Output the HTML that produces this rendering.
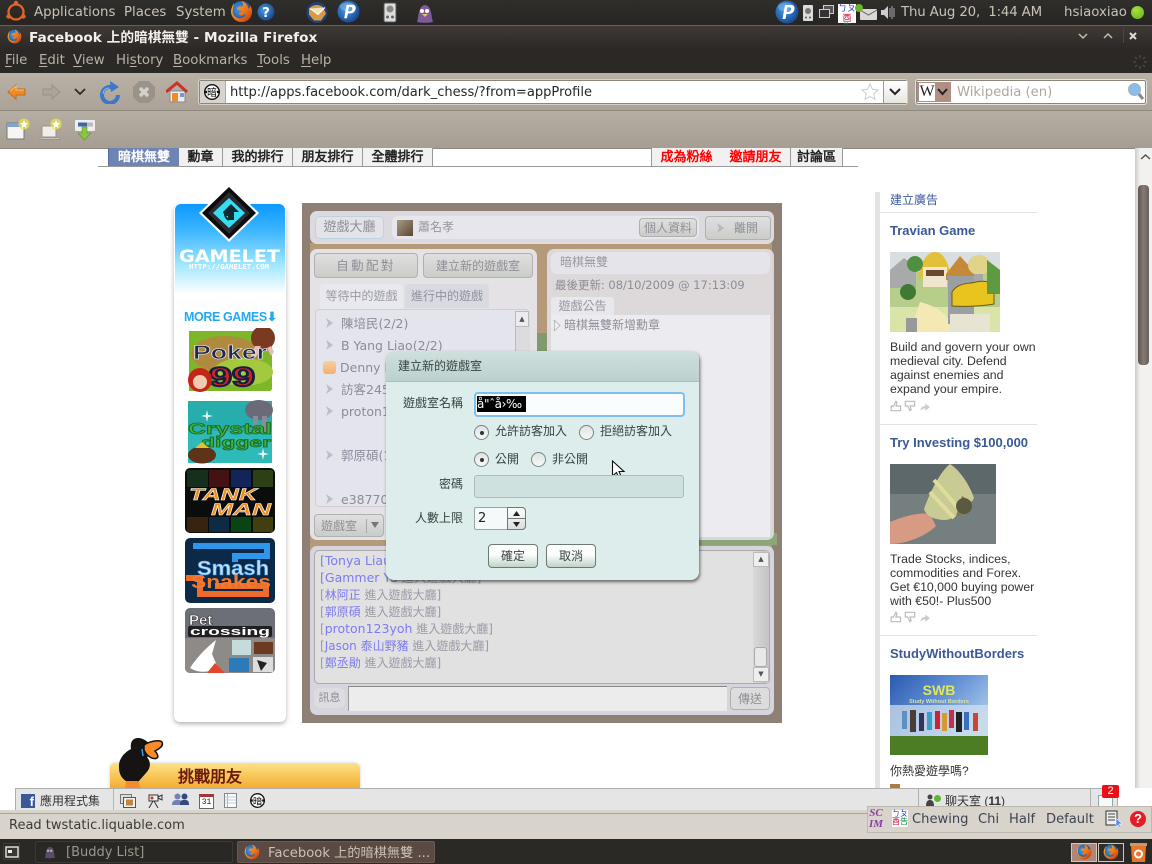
<!DOCTYPE html>
<html lang="zh-Hant"><head><meta charset="utf-8"><title>Facebook 上的暗棋無雙 - Mozilla Firefox</title>
<style>
html,body{margin:0;padding:0;background:#fff}
#r{position:relative;width:1152px;height:864px;overflow:hidden;background:#fff;font-family:"DejaVu Sans","WenQuanYi Zen Hei","Noto Sans CJK TC",sans-serif}
.a{position:absolute;white-space:nowrap}
.p{color:#c9c2b6;font-size:13.33px;line-height:18px}
.m{color:#b9b2a6;font-size:13.33px;line-height:18px;top:52px}
.m u{text-underline-offset:2px}
.tab{top:148px;height:18px;background:#f1f1f1;border-right:1px solid #999;font:bold 13px/17px "Liberation Sans","WenQuanYi Zen Hei",sans-serif;text-align:center;color:#222}
.pn{background:rgba(231,230,238,.88);border-radius:7px}
.btn{background:linear-gradient(#dfdfe0,#cbcdc9);border:1px solid #b1b1ae;border-radius:4px;color:#8f8f96;font-size:12px;text-align:center;box-sizing:border-box}
.li{font-size:12.5px;line-height:18px;color:#8c8c9a;left:341px}
.ch{font-size:12px;color:#9a9aa6;line-height:16px;left:320px}
.ch b{font-weight:normal;color:#7d7bf0}
.d{color:#36443f;font-size:12px;line-height:16px}
.rad{width:13px;height:13px;border:1px solid #7b8684;border-radius:50%;background:linear-gradient(#dfe5e3,#f5f8f7);box-sizing:content-box}
.rad.on:after{content:"";position:absolute;left:5px;top:5px;width:4px;height:4px;border-radius:50%;background:#333}
.ad{font:12.3px/14px "Liberation Sans",sans-serif;color:#333;left:890px}
.ah{font:bold 13px/16px "Liberation Sans",sans-serif;color:#3b5998;left:890px}
.hr{left:880px;width:157px;height:1px;background:#e2e2e2}
.th{border-radius:5px;overflow:hidden}
.t{font-size:13.1px;line-height:18px;color:#3e4450;top:811px}
</style></head><body><div id="r">
<svg width="0" height="0" style="position:absolute"><defs>
<radialGradient id="fb" cx=".4" cy=".4" r=".7"><stop offset="0" stop-color="#4a9be0"/><stop offset="1" stop-color="#123e8a"/></radialGradient>
<linearGradient id="ff" x1="0" y1="0" x2="1" y2="1"><stop offset="0" stop-color="#f9c02b"/><stop offset=".6" stop-color="#ee6f16"/><stop offset="1" stop-color="#b5300e"/></linearGradient>
<symbol id="fx" viewBox="0 0 24 24"><circle cx="12" cy="12" r="11" fill="url(#fb)"/><path d="M4 3c-1 2-3 6-3 10 1 6 6 10 11 10 7 0 11-5 11-11 0-3-1-5-2-6 0 2-1 3-2 3 0-3-3-7-7-8 2 2 2 5 1 6-2-1-5 0-6 2 1 1 4 2 5 2 0 2-2 2-3 3 1 3 5 3 7 0 1 3-3 6-7 5-5-1-7-5-6-9 0-3 1-5 1-7z" fill="url(#ff)"/></symbol>
<symbol id="pp" viewBox="0 0 24 24"><circle cx="12" cy="12" r="11.5" fill="url(#fb)"/><ellipse cx="11" cy="7" rx="8" ry="4.5" fill="#8cc0ee" opacity=".5"/><path d="M10 5h6c3 0 4 2 3.4 4.5-.6 3-3 4.5-6 4.5h-2l-1 5H7.500L10 5zm2.500 2.300-1 4.500h1.500c1.500 0 2.700-.9 3-2.300.3-1.300-.3-2.200-1.700-2.200z" fill="#fff"/></symbol>
<symbol id="an" viewBox="0 0 16 16"><circle cx="8" cy="8" r="7.3" fill="#fff" stroke="#111" stroke-width="1.400"/><rect x=".5" y="6.800" width="2.500" height="2.400" fill="#111"/><rect x="13" y="6.800" width="2.500" height="2.400" fill="#111"/><text x="8" y="12" font-size="10" text-anchor="middle" fill="#000" font-family="WenQuanYi Zen Hei,sans-serif">暗</text></symbol>
<symbol id="th" viewBox="0 0 34 10"><path d="M1 9V5h2l2-4 1 1-1 3h4v4zM13 1v4h2l2 4 1-1-1-3h4V1z" fill="none" stroke="#bbb"/><path d="M26 9c0-3 2-4 4-4V3l4 3-4 3V7c-2 0-3 1-4 2z" fill="#ccc"/></symbol>
</defs></svg>

<!-- top panel -->
<div class="a" style="left:0;top:0;width:1152px;height:25px;background:linear-gradient(#302e2b,#272523);border-bottom:1px solid #6a5f5a"></div>
<svg class="a" style="left:4px;top:0" width="24" height="24" viewBox="0 0 24 24"><circle cx="12" cy="12" r="7.500" fill="none" stroke="#e0632a" stroke-width="2.300"/><circle cx="12" cy="3" r="2.200" fill="#e0632a"/><circle cx="4.500" cy="16.500" r="2.200" fill="#e0632a"/><circle cx="19.500" cy="16.500" r="2.200" fill="#e0632a"/></svg>
<div class="a p" style="left:34px;top:4px">Applications</div><div class="a p" style="left:124px;top:4px">Places</div><div class="a p" style="left:176px;top:4px">System</div>
<svg class="a" style="left:230px;top:0" width="23" height="23"><use href="#fx" width="23" height="23"/></svg>
<svg class="a" style="left:257px;top:3px" width="18" height="18" viewBox="0 0 18 18"><circle cx="9" cy="9" r="8.500" fill="url(#fb)"/><text x="9" y="14" font-size="13" font-weight="bold" fill="#fff" text-anchor="middle">?</text></svg>
<svg class="a" style="left:306px;top:1px" width="22" height="23" viewBox="0 0 22 22"><circle cx="11" cy="11" r="10.500" fill="#1f4378"/><path d="M3 7c4-4 10-5 14-1l3 6-5 7H8L3 13z" fill="#d99a48"/><path d="M4 7l8 6 7-7" fill="#f2e2c0" stroke="#fff"/></svg>
<svg class="a" style="left:337px;top:0" width="23" height="23"><use href="#pp" width="23" height="23"/></svg>
<svg class="a" style="left:380px;top:2px" width="20" height="21" viewBox="0 0 20 21"><rect x="4" y="1" width="12" height="19" rx="1.500" fill="#ddd" stroke="#555"/><circle cx="10" cy="7" r="3.500" fill="#888"/><circle cx="7.500" cy="15" r="1.500" fill="#666"/><circle cx="12.500" cy="15" r="1.500" fill="#666"/></svg>
<svg class="a" style="left:414px;top:2px" width="22" height="22" viewBox="0 0 22 22"><path d="M3 20c2-6 1-16 8-17 7 1 6 11 8 17-5 1-11 1-16 0z" fill="#7d5a9c"/><circle cx="8" cy="9" r="2" fill="#fff"/><circle cx="13" cy="9" r="2" fill="#fff"/><path d="M8 12h6l-3 3z" fill="#ecc154"/></svg>
<svg class="a" style="left:775px;top:0" width="24" height="24"><use href="#pp" width="24" height="24"/></svg>
<svg class="a" style="left:800px;top:3px" width="16" height="20" viewBox="0 0 16 20"><rect x="3" y="2" width="10" height="16" rx="1" fill="#dcdcd8"/><circle cx="8" cy="8" r="3" fill="#777"/><circle cx="6" cy="14.500" r="1" fill="#555"/><circle cx="10" cy="14.500" r="1" fill="#555"/></svg>
<svg class="a" style="left:819px;top:5px" width="15" height="14" viewBox="0 0 15 14"><rect x="4.500" y=".5" width="10" height="8" fill="#555" stroke="#ccc"/><rect x=".5" y="4.500" width="10" height="8" fill="#333" stroke="#ccc"/></svg>
<div class="a" style="left:838px;top:4px;width:18px;height:19px;background:#fff"></div>
<div class="a" style="left:838px;top:4px;width:18px;font:9px/9.500px 'WenQuanYi Zen Hei',sans-serif;white-space:normal;text-align:center;color:#c03"><span style="color:#33c">ㄅㄆ</span><br><span style="color:#c03">酉</span><span style="color:#083">告</span></div>
<svg class="a" style="left:859px;top:8px" width="19" height="13" viewBox="0 0 19 13"><rect x="1" y="1" width="17" height="11" fill="#dad8d4" rx="1"/><path d="M1 2l8.500 5L18 2" fill="none" stroke="#666"/></svg>
<div class="a" style="left:855px;top:4px;width:8px;height:8px;border-radius:50%;background:#6ab42c"></div>
<svg class="a" style="left:880px;top:4px" width="16" height="17" viewBox="0 0 16 17"><path d="M1 6h3l4-4v13l-4-4H1z" fill="#ccc"/><path d="M10 4v9M12 2v13M14 4v9" stroke="#aaa"/></svg>
<div class="a p" style="left:901px;top:4px;letter-spacing:-.15px">Thu Aug 20, &nbsp;1:44 AM</div>
<div class="a p" style="left:1064px;top:4px">hsiaoxiao</div>
<div class="a" style="left:1131px;top:6px;width:13px;height:13px;border-radius:50%;background:radial-gradient(circle at 40% 35%,#a6e040,#64b012)"></div>

<!-- title/menu -->
<div class="a" style="left:0;top:26px;width:1152px;height:47px;background:linear-gradient(#3f3a35,#2b2825 50%,#2b2926)"></div>
<svg class="a" style="left:7px;top:29px" width="15" height="15"><use href="#fx" width="15" height="15"/></svg>
<div class="a" style="left:29px;top:29px;font-size:13.7px;line-height:18px;font-weight:bold;color:#f2f0ec">Facebook 上的暗棋無雙 - Mozilla Firefox</div>
<svg class="a" style="left:1074px;top:27px" width="78" height="18" viewBox="0 0 78 18" fill="none" stroke="#c4bcb2" stroke-width="1.500"><path d="M5 7l4 4 4-4M30 11l4-4 4 4"/><path d="M56 6l6 6m0-6l-6 6" stroke="#ddd" stroke-width="2"/><path d="M49.500 1v15" stroke="#4a4641" stroke-width="1"/></svg>
<div class="a m" style="left:5px"><u>F</u>ile</div><div class="a m" style="left:39px"><u>E</u>dit</div><div class="a m" style="left:73px"><u>V</u>iew</div><div class="a m" style="left:116px">Hi<u>s</u>tory</div><div class="a m" style="left:173px"><u>B</u>ookmarks</div><div class="a m" style="left:257px"><u>T</u>ools</div><div class="a m" style="left:301px"><u>H</u>elp</div>
<svg class="a" style="left:1131px;top:53px" width="18" height="18" viewBox="0 0 18 18" stroke="#4a4641" stroke-width="1.500"><path d="M9 2v3M9 13v3M2 9h3M13 9h3M4 4l2 2M12 12l2 2M14 4l-2 2M6 12l-2 2"/></svg>

<!-- nav toolbar -->
<div class="a" style="left:0;top:73px;width:1152px;height:37px;background:linear-gradient(#b9b1a6,#aba398);border-bottom:1px solid #8f887d"></div>
<div class="a" style="left:0;top:111px;width:1152px;height:37px;background:linear-gradient(#b5aea3,#a69e93);border-bottom:1px solid #8f887d"></div>
<svg class="a" style="left:7px;top:83px" width="19" height="18" viewBox="0 0 19 18"><path d="M1 9l8-7v4h9v6H9v4z" fill="#f08a24" stroke="#c46c1a"/><path d="M3 8l6-5v4h8" fill="none" stroke="#fbc47c"/></svg>
<svg class="a" style="left:42px;top:83px" width="19" height="18" viewBox="0 0 19 18"><path d="M18 9l-8-7v4H1v6h9v4z" fill="#aba499" stroke="#99928a"/></svg>
<svg class="a" style="left:73px;top:87px" width="14" height="10" viewBox="0 0 14 10"><path d="M2 2l5 5 5-5" fill="none" stroke="#2b2b2b" stroke-width="1.800"/></svg>
<svg class="a" style="left:98px;top:80px" width="24" height="24" viewBox="0 0 24 24"><path d="M16 8a8 8 0 1 0 4 7" fill="none" stroke="#3b78c8" stroke-width="4"/><path d="M12 1l9 6-8 5z" fill="#3b78c8"/><path d="M11 8a6 6 0 0 0-6 6" fill="none" stroke="#8fbcec"/></svg>
<svg class="a" style="left:132px;top:80px" width="24" height="24" viewBox="0 0 24 24"><path d="M7 1h10l6 6v10l-6 6H7l-6-6V7z" fill="#9a938a"/><path d="M8 8l8 8m0-8l-8 8" stroke="#d5d0c9" stroke-width="3.500"/></svg>
<svg class="a" style="left:166px;top:81px" width="22" height="22" viewBox="0 0 22 22"><path d="M4 10v11h15V10z" fill="#eee" stroke="#888"/><path d="M0 11L11 2l10 9" fill="none" stroke="#c8342c" stroke-width="3"/><rect x="6" y="12" width="6" height="9" fill="#ee8a2a"/><rect x="14" y="12" width="4" height="4" fill="#6b9ed6"/></svg>
<div class="a" style="left:199px;top:80px;width:708px;height:24px;box-sizing:border-box;background:#fff;border:1px solid #8b857b;box-shadow:0 0 0 1px #d6d0c8;border-radius:2px"></div>
<div class="a" style="left:200px;top:81px;width:25px;height:22px;background:#d8d4cd;border-right:1px solid #aaa"></div>
<svg class="a" style="left:204px;top:84px" width="16" height="16"><use href="#an" width="16" height="16"/></svg>
<div class="a" style="left:230px;top:84px;font-size:13.06px;line-height:18px;color:#262626">http://apps.facebook.com/dark_chess/?from=appProfile</div>
<svg class="a" style="left:861px;top:83px" width="18" height="18" viewBox="0 0 18 18"><path d="M9 1l2.400 5.300 5.600.6-4.200 3.800 1.200 5.700L9 13.500 4 16.400l1.200-5.700L1 6.900l5.600-.6z" fill="#fff" stroke="#ccc"/></svg>
<div class="a" style="left:883px;top:81px;width:23px;height:22px;background:linear-gradient(#fff,#e8e6e2);border-left:1px solid #999"></div>
<svg class="a" style="left:888px;top:88px" width="14" height="9" viewBox="0 0 14 9"><path d="M2 1l5 5 5-5" fill="none" stroke="#222" stroke-width="2"/></svg>
<div class="a" style="left:916px;top:80px;width:230px;height:24px;box-sizing:border-box;background:#fff;border:1px solid #8b857b;box-shadow:0 0 0 1px #e6e2dc;border-radius:2px"></div>
<div class="a" style="left:917px;top:82px;width:34px;height:20px;background:#b08f82"></div>
<div class="a" style="left:919px;top:83px;width:16px;height:18px;background:#fff;font:16px/18px 'Liberation Serif',serif;color:#222;text-align:center">W</div>
<svg class="a" style="left:936px;top:88px" width="13" height="9" viewBox="0 0 13 9"><path d="M2 1l4.500 5L11 1" fill="none" stroke="#222" stroke-width="2"/></svg>
<div class="a" style="left:957px;top:84px;font-size:13.2px;line-height:18px;color:#b0a79e">Wikipedia (en)</div>
<svg class="a" style="left:1127px;top:82px" width="18" height="19" viewBox="0 0 18 19"><path d="M11 11l5 6" stroke="#888" stroke-width="3"/><circle cx="7.500" cy="7.500" r="6" fill="#8bbcec" stroke="#9ba"/></svg>

<svg class="a" style="left:6px;top:118px" width="24" height="24" viewBox="0 0 24 24"><rect x="1" y="5" width="17" height="16" fill="#f5f5f2" stroke="#777"/><rect x="1" y="5" width="17" height="4" fill="#7ca4d8"/><circle cx="18" cy="6" r="5.500" fill="#ece14a" opacity=".75"/><path d="M18 2l1.200 2.700 2.800.3-2 2 .5 2.900L18 8.500l-2.500 1.400.5-2.900-2-2 2.800-.3z" fill="#fff"/></svg>
<svg class="a" style="left:38px;top:118px" width="26" height="24" viewBox="0 0 26 24"><path d="M4 8h14v11H4zM2 20h20v1.500H2z" fill="#f0eee9" stroke="#9a948b"/><circle cx="18" cy="6" r="5.500" fill="#ece14a" opacity=".75"/><path d="M18 2l1.200 2.700 2.800.3-2 2 .5 2.900L18 8.500l-2.500 1.400.5-2.900-2-2 2.800-.3z" fill="#fff"/></svg>
<svg class="a" style="left:74px;top:119px" width="22" height="23" viewBox="0 0 22 23"><rect x="1" y="1" width="20" height="11" rx="1" fill="#eee"/><rect x="4" y="3.500" width="9" height="4" fill="#3d68a8"/><rect x="13" y="3.500" width="6" height="4" fill="#bbb"/><path d="M8 8h5v6h4l-6.500 7L4 14h4z" fill="#8ac73c" stroke="#5f9b25" stroke-width=".6"/></svg>

<!-- page -->
<div class="a" style="left:98px;top:166px;width:760px;height:1px;background:#999"></div>
<div class="a tab" style="left:108px;width:70px;background:#6d84b4;color:#fff;border-left:1px solid #5a6e9c">暗棋無雙</div>
<div class="a tab" style="left:179px;width:43px">勳章</div>
<div class="a tab" style="left:223px;width:69px">我的排行</div>
<div class="a tab" style="left:293px;width:69px">朋友排行</div>
<div class="a tab" style="left:363px;width:69px">全體排行</div>
<div class="a tab" style="left:651px;width:69px;color:#f00;border-left:1px solid #999">成為粉絲</div>
<div class="a tab" style="left:721px;width:69px;color:#f00">邀請朋友</div>
<div class="a tab" style="left:791px;width:51px">討論區</div>

<!-- gamelet -->
<div class="a" style="left:174px;top:204px;width:112px;height:518px;background:#fff;border-radius:6px;box-shadow:0 2px 5px rgba(0,0,0,.3)"></div>
<div class="a" style="left:175px;top:204px;width:110px;height:90px;border-radius:6px 6px 0 0;background:linear-gradient(#0c98ff,#3db6ff 30%,#9ae4ff 65%,#fff 100%)"></div>
<svg class="a" style="left:199px;top:184px" width="60" height="58" viewBox="0 0 60 58"><path d="M30 0l30 29-30 29L0 29z" fill="#fff"/><path d="M30 3l27 26-27 26L3 29z" fill="#0c0c0e"/><path d="M30 8l21 21-21 21-21-21z" fill="#2a2a30"/><path d="M30 14l16 15-16 15-16-15z" fill="#36dcef"/><path d="M24 28l8-8 8 8h-5v8h-6v-4h-2a7 7 0 0 1-3-4z" fill="#0e2a34"/><path d="M26 29a7 7 0 0 0 4 7" stroke="#0e2a34" stroke-width="2" fill="none"/></svg>
<svg class="a" style="left:175px;top:244px" width="110" height="28" viewBox="0 0 110 28"><text x="4" y="18" font-family="DejaVu Sans,sans-serif" font-weight="bold" font-size="17" fill="#fff" textLength="101" lengthAdjust="spacingAndGlyphs">GAMELET</text><text x="14" y="25" font-family="DejaVu Sans Mono,monospace" font-weight="bold" font-size="7" fill="#fff" textLength="80" lengthAdjust="spacingAndGlyphs">HTTP://GAMELET.COM</text></svg>
<div class="a" style="left:184px;top:310px;font:bold 12.5px/14px 'Liberation Sans',sans-serif;color:#23a8f2;letter-spacing:-.4px">MORE GAMES⬇</div>
<!-- thumb 1 -->
<svg class="a" style="left:185px;top:328px" width="90" height="64" viewBox="0 0 90 64"><path d="M4 3h83v57c0 2-1 3-3 3H4z" fill="#7eb62a"/><ellipse cx="40" cy="26" rx="34" ry="18" fill="#b08a3e"/><ellipse cx="58" cy="44" rx="30" ry="14" fill="#a3c93e"/><circle cx="78" cy="10" r="12" fill="#7a3a22"/><path d="M70 18l-4 10 6 0 4-10zM82 20l4 8 3-4-3-6z" fill="#e9b9b6"/><text x="8" y="31" font-family="Liberation Sans,sans-serif" font-weight="bold" font-size="19" fill="#1e2950" stroke="#fff" stroke-width=".5" textLength="74" lengthAdjust="spacingAndGlyphs">Poker</text><text x="24" y="58" font-family="Liberation Sans,sans-serif" font-weight="bold" font-size="27" fill="#d42326" stroke="#132040" stroke-width="2" textLength="46" lengthAdjust="spacingAndGlyphs">99</text><circle cx="15" cy="52" r="12" fill="#c62418"/><circle cx="15" cy="54" r="7" fill="#f0cbb0"/></svg>
<!-- thumb 2 -->
<svg class="a" style="left:187px;top:398px" width="88" height="66" viewBox="0 0 88 66"><rect x="1" y="3" width="84" height="62" fill="#2dbab8"/><rect x="1" y="3" width="84" height="30" fill="#1e9a9c" opacity=".4"/><path d="M20 12l1 5 5 1-5 1-1 5-1-5-5-1 5-1zM76 50l1 5 5 1-5 1-1 5-1-5-5-1 5-1z" fill="#fff"/><ellipse cx="72" cy="12" rx="14" ry="10" fill="#6a6a78"/><path d="M66 18h5v16h-5zM75 18h5v16h-5z" fill="#8b8c9a"/><text x="1" y="36" font-family="Liberation Sans,sans-serif" font-weight="bold" font-size="16" fill="#3cb53a" stroke="#1e6a22" stroke-width=".8" textLength="84" lengthAdjust="spacingAndGlyphs">Crystal</text><text x="14" y="49" font-family="Liberation Sans,sans-serif" font-weight="bold" font-size="14" fill="#3cb53a" stroke="#1e6a22" stroke-width=".8" textLength="70" lengthAdjust="spacingAndGlyphs">digger</text><ellipse cx="15" cy="57" rx="14" ry="8.500" fill="#5e3318"/><path d="M8 50l7-6 7 6z" fill="#e3c22d"/></svg>
<!-- thumb 3 -->
<svg class="a th" style="left:185px;top:468px" width="90" height="65" viewBox="0 0 90 65"><rect width="90" height="65" fill="#0b0c0c"/><g opacity=".9"><rect x="2" y="2" width="21" height="17" fill="#18341f"/><rect x="24" y="2" width="20" height="17" fill="#4b1313"/><rect x="46" y="2" width="20" height="17" fill="#152861"/><rect x="68" y="2" width="20" height="17" fill="#2f4716"/><rect x="2" y="49" width="21" height="15" fill="#3c2610"/><rect x="24" y="49" width="20" height="15" fill="#0e2f4b"/><rect x="46" y="49" width="20" height="15" fill="#0b4b17"/><rect x="68" y="49" width="20" height="15" fill="#49440f"/></g><text x="4" y="32" font-family="Liberation Sans,sans-serif" font-style="italic" font-weight="bold" font-size="17" fill="#ef8c1e" stroke="#fff" stroke-width=".5" textLength="68" lengthAdjust="spacingAndGlyphs">TANK</text><text x="26" y="47" font-family="Liberation Sans,sans-serif" font-style="italic" font-weight="bold" font-size="17" fill="#ef8c1e" stroke="#fff" stroke-width=".5" textLength="60" lengthAdjust="spacingAndGlyphs">MAN</text></svg>
<!-- thumb 4 -->
<svg class="a th" style="left:185px;top:538px" width="90" height="65" viewBox="0 0 90 65"><rect width="90" height="65" fill="#0c2a48"/><path d="M8 8h74v10H50v6" fill="none" stroke="#2f96ea" stroke-width="6"/><path d="M1 40h14v16h66v-8H30" fill="none" stroke="#ef6b2a" stroke-width="6"/><text x="12" y="37" font-family="Liberation Sans,sans-serif" font-weight="bold" font-size="20" fill="#c8dcf0" stroke="#2f96ea" stroke-width=".6" textLength="72" lengthAdjust="spacingAndGlyphs">Smash</text><text x="6" y="50" font-family="Liberation Sans,sans-serif" font-weight="bold" font-size="18" fill="#f07a30" textLength="80" lengthAdjust="spacingAndGlyphs">Snakes</text></svg>
<!-- thumb 5 -->
<svg class="a th" style="left:185px;top:608px" width="90" height="65" viewBox="0 0 90 65"><rect width="90" height="65" fill="#6d6f78"/><rect x="0" y="30" width="90" height="35" fill="#8e8a88"/><text x="4" y="17" font-family="Liberation Sans,sans-serif" font-weight="bold" font-size="15" fill="#fff" stroke="#222" stroke-width=".5">Pet</text><rect x="3" y="18" width="84" height="11" fill="#202022" rx="2"/><text x="5" y="27" font-family="Liberation Sans,sans-serif" font-weight="bold" font-size="11" fill="#fff" textLength="80" lengthAdjust="spacingAndGlyphs">crossing</text><path d="M5 60c8-12 16-20 26-28l-4 14 6 14c-10 5-20 5-28 0z" fill="#fff"/><path d="M22 65l8-10 10 10z" fill="#e7452a"/><rect x="47" y="32" width="19" height="15" fill="#dff" opacity=".7"/><rect x="69" y="34" width="19" height="12" fill="#6d3a20"/><rect x="44" y="50" width="20" height="14" fill="#2a7bb8"/><rect x="68" y="49" width="20" height="15" fill="#ddd"/><path d="M72 52l10 3-6 8z" fill="#222"/></svg>

<!-- challenge -->
<div class="a" style="left:110px;top:763px;width:250px;height:30px;background:linear-gradient(#fde187,#f0a31e);border-radius:5px 5px 0 0;box-shadow:0 0 3px #ccc"></div>
<div class="a" style="left:178px;top:768px;font:bold 16px/20px 'Liberation Sans','WenQuanYi Zen Hei',sans-serif;color:#6d1a0c">挑戰朋友</div>
<svg class="a" style="left:118px;top:737px" width="46" height="52" viewBox="0 0 46 52"><path d="M20 1c-6 0-8 5-7 11-6 3-13 10-12 19 0 7 4 12 9 14h10l8-9c5-5 5-11 1-16 4-1 5-6 4-9-1-6-8-10-13-10z" fill="#171312"/><path d="M26 8c4-3 15-6 18-3 2 4-3 7-7 9 2 2 4 6 2 7-3 2-10-1-13-8z" fill="#f78a2a" stroke="#111" stroke-width="1.500"/><path d="M8 44l-1 8h16l-3-8z" fill="#f78a2a"/><path d="M24 12l1 7" stroke="#39a0e0" stroke-width="1.500"/></svg>

<!-- game area -->
<div class="a" style="left:302px;top:203px;width:480px;height:520px;background:#8e8075;overflow:hidden">
 <div class="a" style="left:8px;top:40px;width:462px;height:310px;background:#b49a78"></div>
 <div class="a" style="left:235px;top:130px;width:10px;height:20px;background:#7f9a6c"></div>
 <div class="a" style="left:385px;top:330px;width:90px;height:12px;background:#8da678"></div>
</div>
<div class="a pn" style="left:310px;top:211px;width:464px;height:33px"></div>
<div class="a pn" style="left:310px;top:249px;width:227px;height:291px;background:rgba(232,231,238,.93)"></div>
<div class="a pn" style="left:547px;top:249px;width:227px;height:291px;background:rgba(228,227,234,.85)"></div>
<div class="a pn" style="left:310px;top:546px;width:464px;height:169px;background:#d6d4dc"></div>

<div class="a btn" style="left:315px;top:216px;width:69px;height:23px;line-height:21px;border:1px solid #bcd3df;background:#e4e4e8;font-size:13px;border-radius:5px">遊戲大廳</div>
<div class="a" style="left:392px;top:216px;width:307px;height:23px;background:#e6e6ec;border-radius:6px"></div>
<div class="a" style="left:397px;top:220px;width:16px;height:16px;background:linear-gradient(135deg,#a89a82,#5c4636)"></div>
<div class="a" style="left:418px;top:219px;font-size:12px;line-height:16px;color:#96969e">蕭名孝</div>
<div class="a btn" style="left:639px;top:218px;width:58px;height:19px;line-height:18px;font-size:12px">個人資料</div>
<div class="a btn" style="left:705px;top:216px;width:66px;height:24px;line-height:22px;font-size:12px;padding-left:16px">離開</div>
<svg class="a" style="left:716px;top:223px" width="9" height="10" viewBox="0 0 9 10"><path d="M1 0l7 5-7 5 2-5z" fill="#b8b8c0"/></svg>

<div class="a btn" style="left:314px;top:253px;width:104px;height:25px;line-height:24px;font-size:12.5px;letter-spacing:2.400px">自動配對</div>
<div class="a btn" style="left:423px;top:253px;width:110px;height:25px;line-height:24px;font-size:12px">建立新的遊戲室</div>
<div class="a" style="left:320px;top:284px;width:83px;height:26px;background:#e8e8ee;border-radius:4px 4px 0 0;font-size:12px;line-height:25px;text-align:center;color:#9b9ba4">等待中的遊戲</div>
<div class="a" style="left:405px;top:284px;width:84px;height:24px;background:rgba(215,215,224,.85);border-radius:4px 4px 0 0;font-size:12px;line-height:24px;text-align:center;color:#92929c">進行中的遊戲</div>
<div class="a" style="left:315px;top:309px;width:214px;height:198px;background:#e4e4ed;border:1px solid #cfcfd6;border-radius:4px;box-sizing:border-box"></div>
<div class="a li" style="top:315px">陳培民(2/2)</div>
<div class="a li" style="top:337px">B Yang Liao(2/2)</div>
<div class="a li" style="top:359px;left:340px">Denny Hsu</div>
<div class="a li" style="top:381px">訪客245</div>
<div class="a li" style="top:403px">proton123</div>
<div class="a li" style="top:447px">郭原碩(1</div>
<div class="a li" style="top:491px">e38770</div>
<svg class="a" style="left:325px;top:318px" width="9" height="190" viewBox="0 0 9 190" fill="#bdbdc8"><path d="M1 0l7 5-7 5 2-5zM1 22l7 5-7 5 2-5zM1 66l7 5-7 5 2-5zM1 88l7 5-7 5 2-5zM1 132l7 5-7 5 2-5zM1 176l7 5-7 5 2-5z"/></svg>
<div class="a" style="left:323px;top:361px;width:13px;height:13px;background:linear-gradient(#f9cfa0,#f2b071);border-radius:3px"></div>
<div class="a" style="left:515px;top:311px;width:14px;height:40px;background:#dcdce0;border-left:1px solid #bbb"></div>
<div class="a" style="left:515px;top:311px;width:14px;height:16px;background:#ecebef;border:1px solid #bbb;box-sizing:border-box;font-size:7px;line-height:14px;text-align:center;color:#555">▲</div>
<div class="a btn" style="left:314px;top:514px;width:70px;height:23px;line-height:22px;text-align:left;padding-left:6px;font-size:12px">遊戲室</div>
<div class="a" style="left:366px;top:519px;width:1px;height:14px;background:#aaa"></div>
<svg class="a" style="left:371px;top:522px" width="9" height="6"><path d="M0 0h8l-4 6z" fill="#777"/></svg>

<div class="a" style="left:551px;top:252px;width:219px;height:22px;background:#e4e4ea;border-radius:6px;font-size:12px;line-height:21px;text-indent:9px;color:#9a9aa2">暗棋無雙</div>
<div class="a" style="left:555px;top:277px;font-size:11.5px;line-height:16px;color:#8d8d96;letter-spacing:-.02px">最後更新: 08/10/2009 @ 17:13:09</div>
<div class="a" style="left:551px;top:297px;width:63px;height:18px;background:#e7e7ec;font-size:12px;line-height:19px;text-align:center;color:#97979f;border-radius:3px 3px 0 0">遊戲公告</div>
<div class="a" style="left:551px;top:315px;width:219px;height:222px;background:#ebebf0"></div>
<div class="a" style="left:564px;top:317px;font-size:12px;line-height:16px;color:#8f8f98">暗棋無雙新增勳章</div>
<svg class="a" style="left:553px;top:320px" width="8" height="11"><path d="M1 0l6 5.500-6 5.500 1-5.500z" fill="#f4f4f4" stroke="#aaa" stroke-width=".7"/></svg>

<div class="a" style="left:314px;top:550px;width:456px;height:134px;background:#e2e1e2;border:1px solid #aaa;border-radius:5px;box-sizing:border-box"></div>
<div class="a" style="left:753px;top:551px;width:16px;height:132px;background:linear-gradient(90deg,#d9d9d9,#c3c3c3)"></div>
<div class="a" style="left:753px;top:552px;width:16px;height:15px;background:#eee;border:1px solid #bbb;box-sizing:border-box;font-size:7px;line-height:13px;text-align:center;color:#555">▲</div>
<div class="a" style="left:753px;top:667px;width:16px;height:15px;background:#eee;border:1px solid #bbb;box-sizing:border-box;font-size:7px;line-height:13px;text-align:center;color:#555">▼</div>
<div class="a" style="left:754px;top:647px;width:13px;height:20px;background:#e8e8e8;border:1px solid #aaa;border-radius:3px;box-sizing:border-box"></div>
<div class="a ch" style="top:553px;font-size:12.5px"><b>[Tonya Liau</b></div>
<div class="a ch" style="top:570px;font-size:12.5px"><b>[Gammer Yu</b> 進入遊戲大廳]</div>
<div class="a ch" style="top:587px">[<b>林阿正</b> 進入遊戲大廳]</div>
<div class="a ch" style="top:604px">[<b>郭原碩</b> 進入遊戲大廳]</div>
<div class="a ch" style="top:621px">[<b style="font-size:12.5px">proton123yoh</b> 進入遊戲大廳]</div>
<div class="a ch" style="top:638px">[<b>Jason 泰山野豬</b> 進入遊戲大廳]</div>
<div class="a ch" style="top:655px">[<b>鄭丞勛</b> 進入遊戲大廳]</div>
<div class="a" style="left:314px;top:688px;width:31px;height:20px;background:#dddde1;border-radius:6px;font-size:11px;line-height:20px;text-align:center;color:#8c8c94">訊息</div>
<div class="a" style="left:348px;top:686px;width:379px;height:25px;background:#ececec;border-left:1px solid #999;border-top:1px solid #888;box-sizing:border-box"></div>
<div class="a btn" style="left:730px;top:687px;width:40px;height:23px;line-height:22px;font-size:12px;background:#dcdcdc">傳送</div>

<!-- dialog -->
<div class="a" style="left:386px;top:351px;width:313px;height:229px;background:#dcedec;border-radius:8px;box-shadow:1px 2px 3px rgba(0,0,0,.55)"></div>
<div class="a" style="left:386px;top:351px;width:313px;height:31px;background:linear-gradient(#cfe0df,#bcd1cd);border-radius:8px 8px 0 0;border-bottom:1px solid #a9c0bc;box-sizing:border-box"></div>
<div class="a d" style="left:398px;top:358px">建立新的遊戲室</div>
<div class="a d" style="left:403px;top:395px">遊戲室名稱</div>
<div class="a" style="left:474px;top:392px;width:211px;height:25px;background:#fafdfd;border:2px solid #7fbff0;border-radius:4px;box-sizing:border-box"></div>
<div class="a" style="left:477px;top:396px;width:49px;height:16px;background:#000;color:#fff;font-size:12px;line-height:16px;overflow:hidden;letter-spacing:-.4px">å"ˆå›‰</div>
<div class="a rad on" style="left:474px;top:425px"></div>
<div class="a d" style="left:495px;top:423px">允許訪客加入</div>
<div class="a rad" style="left:579px;top:425px"></div>
<div class="a d" style="left:600px;top:423px">拒絕訪客加入</div>
<div class="a rad on" style="left:474px;top:452px"></div>
<div class="a d" style="left:495px;top:451px">公開</div>
<div class="a rad" style="left:531px;top:452px"></div>
<div class="a d" style="left:552px;top:451px">非公開</div>
<svg class="a" style="left:611px;top:460px" width="15" height="22" viewBox="0 0 15 22"><path d="M1.500 1v15l4-3.500 3 7 2.500-1-3-7h5z" fill="#fff" stroke="#111" stroke-width="1.100"/></svg>
<div class="a d" style="left:439px;top:476px">密碼</div>
<div class="a" style="left:474px;top:475px;width:210px;height:23px;background:#cfe1de;border:1px solid #adbdba;border-radius:3px;box-sizing:border-box"></div>
<div class="a d" style="left:415px;top:510px">人數上限</div>
<div class="a" style="left:474px;top:507px;width:52px;height:23px;background:#f4fafa;border:1px solid #9aa6a4;border-radius:2px 4px 4px 2px;box-sizing:border-box;font-size:13px;line-height:21px;text-indent:3px;color:#222">2</div>
<div class="a" style="left:507px;top:507px;width:19px;height:23px;background:linear-gradient(#fff,#d8dfde);border:1px solid #777;border-radius:0 4px 4px 0;box-sizing:border-box"></div>
<div class="a" style="left:508px;top:518px;width:17px;height:1px;background:#777"></div>
<svg class="a" style="left:512px;top:510px" width="9" height="18"><path d="M4.500 1L8 6H1zM1 12h7l-3.500 5z" fill="#222"/></svg>
<div class="a d" style="left:488px;top:544px;width:50px;height:24px;background:linear-gradient(#fbfdfc 45%,#c0d2c8);border:1px solid #6c7a74;border-radius:4px;box-sizing:border-box;text-align:center;line-height:22px">確定</div>
<div class="a d" style="left:546px;top:544px;width:50px;height:24px;background:linear-gradient(#fbfdfc 45%,#c0d2c8);border:1px solid #6c7a74;border-radius:4px;box-sizing:border-box;text-align:center;line-height:22px">取消</div>

<!-- ads -->
<div class="a" style="left:875px;top:192px;width:5px;height:596px;background:#e3e3e3"></div>
<div class="a" style="left:890px;top:192px;font:12px/16px 'Liberation Sans','WenQuanYi Zen Hei',sans-serif;color:#3b5998">建立廣告</div>
<div class="a hr" style="top:212px"></div>
<div class="a ah" style="top:223px">Travian Game</div>
<svg class="a" style="left:890px;top:252px" width="110" height="80" viewBox="0 0 110 80"><rect width="110" height="80" fill="#b7cd8a"/><rect width="110" height="20" fill="#d9dfe1"/><path d="M0 55h110v25H0z" fill="#d9e4a8"/><path d="M30 50c20 5 30 15 35 30H20z" fill="#f4e8b4"/><path d="M0 18l14-12 12 8v22H0z" fill="#a8a9ab"/><path d="M28 26c2-14 8-26 17-26s14 12 16 26z" fill="#e3c03a"/><rect x="33" y="15" width="24" height="20" fill="#f0e6cc"/><rect x="36" y="18" width="18" height="6" fill="#6a4a2e"/><path d="M56 22l14-18 22 24H56z" fill="#c48a3a"/><rect x="58" y="24" width="26" height="48" fill="#9b9ea3"/><ellipse cx="89" cy="13" rx="11" ry="10" fill="#e0d48a"/><rect x="84" y="22" width="9" height="16" fill="#a8a8a8"/><path d="M62 40c6-10 18-8 24-10 10-2 18 0 18 8v14c-10 2-30 3-42 2z" fill="#e8c41e" stroke="#6b5a12"/><rect x="60" y="62" width="40" height="18" fill="#e8e4d4"/><path d="M97 8l13 10v24H97z" fill="#5d9a42"/><circle cx="18" cy="40" r="8" fill="#3f7a34"/><circle cx="25" cy="12" r="8" fill="#4f9040"/><rect x="16" y="66" width="11" height="14" fill="#999"/></svg>
<div class="a ad" style="top:340px">Build and govern your own<br>medieval city. Defend<br>against enemies and<br>expand your empire.</div>
<svg class="a" style="left:890px;top:400px" width="40" height="12"><use href="#th" width="40" height="12"/></svg>
<div class="a hr" style="top:424px"></div>
<div class="a ah" style="top:435px">Try Investing $100,000</div>
<svg class="a" style="left:890px;top:464px" width="106" height="80" viewBox="0 0 106 80"><rect width="106" height="80" fill="#767f80"/><rect width="106" height="30" fill="#5d686a"/><path d="M0 58c14-6 30-10 40-8l6 12c-10 10-30 18-46 18z" fill="#d79a82"/><path d="M34 45C40 28 50 8 60 0c10 6 20 22 24 34-4 8-16 20-28 22-12 0-20-4-22-11z" fill="#c9cb94"/><path d="M44 16l26 30M40 28l24 26" stroke="#e0dc9c" stroke-width="4"/><path d="M72 32l10 6-4 12-12 2z" fill="#7d7c55"/><circle cx="74" cy="42" r="8" fill="#5a5a40"/></svg>
<div class="a ad" style="top:552px">Trade Stocks, indices,<br>commodities and Forex.<br>Get €10,000 buying power<br>with €50!- Plus500</div>
<svg class="a" style="left:890px;top:611px" width="40" height="12"><use href="#th" width="40" height="12"/></svg>
<div class="a hr" style="top:635px"></div>
<div class="a ah" style="top:646px">StudyWithoutBorders</div>
<svg class="a" style="left:890px;top:675px" width="98" height="80" viewBox="0 0 98 80"><defs><linearGradient id="sk" x1="0" y1="0" x2="1" y2=".6"><stop offset="0" stop-color="#2a5ab0"/><stop offset=".6" stop-color="#6a96d8"/><stop offset="1" stop-color="#a8c8e8"/></linearGradient></defs><rect width="98" height="62" fill="url(#sk)"/><rect y="30" width="98" height="32" fill="#d6e2ee" opacity=".7"/><rect y="61" width="98" height="19" fill="#4c7d24"/><text x="49" y="20" font-family="Liberation Sans,sans-serif" font-weight="bold" font-size="14" text-anchor="middle" fill="#dfe85a">SWB</text><text x="49" y="28" font-family="Liberation Sans,sans-serif" font-weight="bold" font-size="5.500" text-anchor="middle" fill="#d8e4a4">Study Without Borders</text><g fill="#4a3c38"><rect x="12" y="36" width="5" height="18" fill="#5b90c0"/><rect x="20" y="35" width="6" height="22"/><rect x="29" y="38" width="5" height="18" fill="#335"/><rect x="37" y="37" width="5" height="18" fill="#3aa0c8"/><rect x="45" y="36" width="5" height="18" fill="#c23"/><rect x="52" y="38" width="5" height="18" fill="#d89a30"/><rect x="59" y="35" width="5" height="18" fill="#c23050"/><rect x="66" y="37" width="6" height="20" fill="#222"/><rect x="74" y="37" width="5" height="18" fill="#3a70c0"/><rect x="83" y="38" width="5" height="18" fill="#c43"/></g></svg>
<div class="a" style="left:890px;top:763px;font:12px/16px 'Liberation Sans','WenQuanYi Zen Hei',sans-serif;color:#333">你熱愛遊學嗎?</div>
<div class="a" style="left:890px;top:784px;width:10px;height:5px;background:#b07a44"></div>

<!-- scrollbar -->
<div class="a" style="left:1135px;top:148px;width:17px;height:640px;background:linear-gradient(90deg,#cfcbc6,#f2f1ef 30%,#f2f1ef 100%)"></div>
<svg class="a" style="left:1140px;top:153px" width="11" height="9"><path d="M1 6l4.500-4L10 6" fill="none" stroke="#555" stroke-width="1.500"/></svg>
<div class="a" style="left:1138px;top:185px;width:11px;height:180px;background:linear-gradient(90deg,#5f5450,#857a75 50%,#6a5f5a);border-radius:4px"></div>

<!-- fb bar -->
<div class="a" style="left:15px;top:788px;width:1103px;height:22px;background:#e5e5e5;border:1px solid #b0b0b0;border-bottom:0;box-sizing:border-box"></div>
<div class="a" style="left:113px;top:789px;width:1px;height:22px;background:#b5b5b5"></div>
<div class="a" style="left:21px;top:794px;width:14px;height:14px;background:#3b5998;color:#fff;font:bold 13px/16px 'Liberation Sans',sans-serif;text-align:right;overflow:hidden"><span style="padding-right:1px">f</span></div>
<div class="a" style="left:40px;top:793px;font:12px/16px 'Liberation Sans','WenQuanYi Zen Hei',sans-serif;color:#333">應用程式集</div>
<svg class="a" style="left:120px;top:793px" width="16" height="15"><rect x=".5" y="1.500" width="11" height="9" fill="#ddd" stroke="#777"/><rect x="3.500" y="4.500" width="12" height="10" fill="#f3f3f3" stroke="#555"/><rect x="6" y="6.500" width="7" height="6" fill="#c2863e"/></svg>
<svg class="a" style="left:146px;top:794px" width="17" height="14"><rect x="3" y="1" width="9" height="6" fill="#eee" stroke="#333"/><circle cx="6" cy="4" r="1.500" fill="#c33"/><path d="M7 7L3 14M8 7l4 7M12 3l4-2v5l-4-2" fill="none" stroke="#333"/></svg>
<svg class="a" style="left:172px;top:792px" width="17" height="15"><circle cx="5.500" cy="4.500" r="3" fill="#6d84b4"/><path d="M0 13c0-4 2-5 5.500-5S11 9 11 13z" fill="#6d84b4"/><circle cx="12.500" cy="4.500" r="3" fill="#334a7a"/><path d="M8 13c0-4 1-5 4.500-5S17 9 17 13z" fill="#334a7a"/></svg>
<div class="a" style="left:199px;top:794px;width:15px;height:15px;background:#fff;border:1px solid #666;border-top:3px solid #a33;box-sizing:border-box;font:8px/11px 'Liberation Mono',monospace;text-align:center;color:#222">31</div>
<svg class="a" style="left:224px;top:793px" width="13" height="15"><rect x=".5" y=".5" width="12" height="14" fill="#fff" stroke="#888"/><path d="M3.500 1v13" stroke="#e99"/><path d="M1 4h11M1 7h11M1 10h11" stroke="#bcd"/></svg>
<svg class="a" style="left:250px;top:793px" width="15" height="15"><use href="#an" width="15" height="15"/></svg>
<div class="a" style="left:918px;top:788px;width:1px;height:22px;background:#b0b0b0"></div>
<div class="a" style="left:1090px;top:788px;width:1px;height:22px;background:#b0b0b0"></div>
<svg class="a" style="left:926px;top:794px" width="9" height="13"><circle cx="4" cy="3" r="2.500" fill="#444"/><path d="M0 12c0-5 2-6 4-6s4 1 4 6z" fill="#444"/></svg>
<div class="a" style="left:934px;top:795px;width:7px;height:7px;border-radius:50%;background:#5fb52e"></div>
<div class="a" style="left:945px;top:793px;font:12px/16px 'Liberation Sans','WenQuanYi Zen Hei',sans-serif;color:#333">聊天室 (<b>11</b>)</div>
<div class="a" style="left:1098px;top:795px;width:15px;height:14px;background:#f8f8f8;border:1px solid #8aa;box-sizing:border-box"></div>
<div class="a" style="left:1102px;top:785px;width:17px;height:13px;background:#e8111a;border-radius:2px;color:#fff;font:11px/13px 'Liberation Sans',sans-serif;text-align:center">2</div>

<!-- status bar -->
<div class="a" style="left:0;top:813px;width:1152px;height:26px;background:#d8d3cb;border-top:1px solid #a8a39b;box-sizing:border-box"></div>
<div class="a" style="left:0;top:810px;width:1152px;height:3px;background:#d8d3cb"></div>
<div class="a" style="left:9px;top:817px;font-size:13px;line-height:18px;color:#3c3a36">Read twstatic.liquable.com</div>
<div class="a" style="left:867px;top:806px;width:285px;height:27px;background:#d8d3cb;border:1px solid #bdb8b0;box-sizing:border-box"></div>
<div class="a" style="left:869px;top:808px;font:italic bold 11px/11px 'Liberation Serif',serif;color:#8a3fa0;text-align:center">SC<br>IM</div>
<div class="a" style="left:892px;top:810px;width:16px;height:17px;background:#fff;font:8px/8px 'WenQuanYi Zen Hei',sans-serif;text-align:center;color:#c03;white-space:normal"><span style="color:#33c">ㄅㄆ</span><br>酉<span style="color:#083">告</span></div>
<div class="a t" style="left:912px">Chewing</div>
<div class="a t" style="left:978px">Chi</div>
<div class="a t" style="left:1009px">Half</div>
<div class="a t" style="left:1046px">Default</div>
<svg class="a" style="left:1105px;top:810px" width="18" height="18"><rect x="1" y="1" width="11" height="14" fill="#eee" stroke="#333"/><path d="M3 4h7M3 7h7M3 10h7" stroke="#444"/><path d="M11 8v9l2-2 2 3 1-1-2-3h3z" fill="#5a8df0" stroke="#fff" stroke-width=".5"/></svg>
<div class="a" style="left:1130px;top:811px;width:16px;height:16px;border-radius:50%;background:#e51c23;color:#fff;font:bold 13px/16px 'Liberation Sans',sans-serif;text-align:center">?</div>

<!-- bottom panel -->
<div class="a" style="left:0;top:839px;width:1152px;height:25px;background:#2b2926"></div>
<div class="a" style="left:3px;top:843px;width:17px;height:17px;border:1px solid #403d39;box-sizing:border-box"></div>
<svg class="a" style="left:5px;top:846px" width="14" height="12"><rect x="1" y="1" width="12" height="10" fill="#3a3835" stroke="#ddd" stroke-width="1.500"/><rect x="3" y="4" width="4" height="3" fill="#eee"/></svg>
<div class="a" style="left:35px;top:841px;width:198px;height:22px;background:#2a2825;border:1px solid #3b3835;border-radius:2px;box-sizing:border-box"></div>
<svg class="a" style="left:43px;top:844px" width="14" height="16" viewBox="0 0 22 22"><path d="M3 20c2-6 1-16 8-17 7 1 6 11 8 17-5 1-11 1-16 0z" fill="#5b4a6a"/><circle cx="8" cy="9" r="2" fill="#aaa"/><circle cx="13" cy="9" r="2" fill="#aaa"/></svg>
<div class="a" style="left:66px;top:844px;font-size:13px;line-height:18px;color:#9b958b">[Buddy List]</div>
<div class="a" style="left:237px;top:841px;width:198px;height:22px;background:#5b4a44;border:1px solid #6b5a52;border-radius:2px;box-sizing:border-box"></div>
<svg class="a" style="left:244px;top:844px" width="16" height="16"><use href="#fx" width="16" height="16"/></svg>
<div class="a" style="left:268px;top:845px;font-size:13.2px;line-height:18px;color:#c9c2b6">Facebook 上的暗棋無雙 ...</div>
<div class="a" style="left:1071px;top:843px;width:26px;height:19px;background:#ae8778;border:1px solid #cfc9c0;box-sizing:border-box"></div>
<svg class="a" style="left:1076px;top:844px" width="16" height="16"><use href="#fx" width="16" height="16"/></svg>
<div class="a" style="left:1098px;top:843px;width:26px;height:19px;background:#2f2d2a;border:1px solid #cfc9c0;box-sizing:border-box"></div>
<svg class="a" style="left:1103px;top:844px" width="16" height="16"><use href="#fx" width="16" height="16"/></svg>
<svg class="a" style="left:1129px;top:842px" width="20" height="21" viewBox="0 0 20 21"><path d="M1 1h17v3H1z" fill="#c49a6c"/><path d="M2 4h15l-1 16H3z" fill="#e8762a"/><circle cx="9.500" cy="12" r="3.500" fill="none" stroke="#fff" stroke-width="2"/></svg>
</div></body></html>
